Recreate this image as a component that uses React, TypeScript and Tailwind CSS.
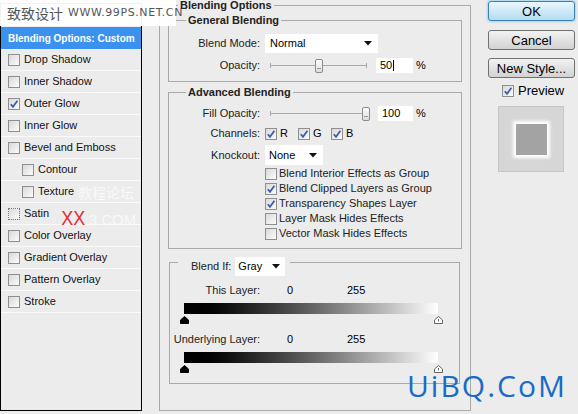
import React from 'react';

const ui = "font-['Liberation_Sans',Arial,sans-serif]";

function Check({ on = false, dotted = false }: { on?: boolean; dotted?: boolean }) {
  return (
    <span
      className={`w-[12px] h-[12px] shrink-0 flex items-center justify-center bg-linear-to-br from-[#d9d9d9] to-[#fbfbfb] border ${
        dotted ? 'border-dotted border-[#777]' : 'border-[#8f8f8f]'
      }`}
    >
      {on && (
        <svg width="10" height="10" viewBox="0 0 10 10">
          <path d="M1.8 5.2 L4 7.8 L8.4 1.8" fill="none" stroke="#3a59a8" strokeWidth="1.7" />
        </svg>
      )}
    </span>
  );
}

function Arrow() {
  return (
    <svg width="8" height="5" viewBox="0 0 8 5">
      <path d="M0 0 H8 L4 4.5 Z" fill="#111" />
    </svg>
  );
}

function Track({ width, pos }: { width: number; pos: number }) {
  return (
    <div className="relative h-[14px] flex items-center" style={{ width }}>
      <div className="w-full h-[1px] bg-[#a8a8a8]" />
      <div className="absolute left-0 top-[4px] w-[1px] h-[5px] bg-[#a8a8a8]" />
      <div className="absolute right-0 top-[4px] w-[1px] h-[5px] bg-[#a8a8a8]" />
      <div
        className="absolute top-0 w-[8px] h-[14px] rounded-[2px] border border-[#8b8b8b] bg-linear-to-b from-[#fdfdfd] to-[#dcdcdc] flex items-end justify-center pb-[3px]"
        style={{ left: pos }}
      >
        <div className="w-[4px] h-[1px] bg-[#9a9a9a]" />
      </div>
    </div>
  );
}

function Marker({ dark }: { dark?: boolean }) {
  return (
    <svg width="9" height="8" viewBox="0 0 9 8">
      <path
        d="M4.5 0.5 L8.5 4 V7.5 H0.5 V4 Z"
        fill={dark ? '#000' : '#fff'}
        stroke={dark ? '#000' : '#666'}
        strokeWidth="1"
      />
      {!dark && <path d="M4.5 3 V5.5" stroke="#666" strokeWidth="1" />}
    </svg>
  );
}

const effects = [
  { name: 'Drop Shadow' },
  { name: 'Inner Shadow' },
  { name: 'Outer Glow', on: true },
  { name: 'Inner Glow' },
  { name: 'Bevel and Emboss' },
  { name: 'Contour', sub: true },
  { name: 'Texture', sub: true },
  { name: 'Satin', dotted: true },
  { name: 'Color Overlay' },
  { name: 'Gradient Overlay' },
  { name: 'Pattern Overlay' },
  { name: 'Stroke' },
];

const advanced = [
  { label: 'Blend Interior Effects as Group' },
  { label: 'Blend Clipped Layers as Group', on: true },
  { label: 'Transparency Shapes Layer', on: true },
  { label: 'Layer Mask Hides Effects' },
  { label: 'Vector Mask Hides Effects' },
];

export default function App() {
  return (
    <div className={`relative w-[578px] h-[414px] overflow-hidden bg-[#ececec] text-[11px] text-black ${ui}`}>
      <div className="flex items-start">
        {/* Styles list */}
        <div className="mt-[3px] w-[142px] h-[408px] border border-black bg-[#ececec] flex flex-col">
          <div className="h-[23px] shrink-0" />
          <div className="h-[22px] shrink-0 bg-[#3a92ee] text-white font-bold text-[10px] flex items-center pl-[7px]">
            Blending Options: Custom
          </div>
          {effects.map((e) => (
            <div
              key={e.name}
              className={`h-[22px] shrink-0 flex items-center gap-[4px] border-b border-[#fafafa] ${
                e.sub ? 'pl-[21px]' : 'pl-[7px]'
              }`}
            >
              <Check on={e.on} dotted={e.dotted} />
              <span className="text-[#111]">{e.name}</span>
            </div>
          ))}
        </div>

        {/* Blending Options */}
        <fieldset className="ml-[17px] w-[312px] h-[411px] border border-[#a9a9a9] px-[8px]">
          <legend className="ml-[10px] px-[2px] h-[11px] leading-[11px] font-bold text-[#222]">
            Blending Options
          </legend>

          <fieldset className="mt-[3px] w-[294px] border border-[#a9a9a9] pb-[8px]">
            <legend className="ml-[17px] px-[2px] h-[13px] leading-[13px] font-bold text-[#222]">
              General Blending
            </legend>
            <div className="mt-[7px] flex items-center h-[19px]">
              <span className="w-[91px] text-right text-[#222]">Blend Mode:</span>
              <div className="ml-[5px] w-[113px] h-[19px] bg-white flex items-center justify-between pl-[5px] pr-[6px]">
                <span>Normal</span>
                <Arrow />
              </div>
            </div>
            <div className="mt-[5px] flex items-center h-[15px]">
              <span className="w-[91px] text-right text-[#222]">Opacity:</span>
              <div className="ml-[10px]">
                <Track width={97} pos={45} />
              </div>
              <div className="ml-[9px] w-[37px] h-[15px] bg-white flex items-center pl-[4px]">
                50<span className="ml-[1px] w-[1px] h-[11px] bg-black" />
              </div>
              <span className="ml-[3px]">%</span>
            </div>
          </fieldset>

          <fieldset className="mt-[4px] w-[294px] border border-[#a9a9a9] pb-[7px]">
            <legend className="ml-[17px] px-[2px] h-[13px] leading-[13px] font-bold text-[#222]">
              Advanced Blending
            </legend>
            <div className="mt-[7px] flex items-center h-[15px]">
              <span className="w-[91px] text-right text-[#222]">Fill Opacity:</span>
              <div className="ml-[10px]">
                <Track width={97} pos={92} />
              </div>
              <div className="ml-[11px] w-[35px] h-[15px] bg-white flex items-center pl-[4px]">100</div>
              <span className="ml-[3px]">%</span>
            </div>
            <div className="mt-[5px] flex items-center h-[15px]">
              <span className="w-[91px] text-right text-[#222]">Channels:</span>
              <div className="ml-[5px] flex items-center">
                {['R', 'G', 'B'].map((c) => (
                  <div key={c} className="w-[33px] flex items-center gap-[3px]">
                    <Check on />
                    <span>{c}</span>
                  </div>
                ))}
              </div>
            </div>
            <div className="mt-[4px] flex items-center h-[20px]">
              <span className="w-[91px] text-right text-[#222]">Knockout:</span>
              <div className="ml-[5px] w-[58px] h-[20px] bg-white flex items-center justify-between pl-[4px] pr-[6px]">
                <span>None</span>
                <Arrow />
              </div>
            </div>
            <div className="mt-[1px] flex flex-col">
              {advanced.map((a) => (
                <div key={a.label} className="h-[15px] flex items-center gap-[2px] pl-[96px]">
                  <Check on={a.on} />
                  <span className="text-[#222]">{a.label}</span>
                </div>
              ))}
            </div>
          </fieldset>

          <fieldset className="mt-[8px] ml-[1px] w-[291px] border border-[#a9a9a9] pb-[10px]">
            <legend className="ml-[8px] pl-[13px] pr-[5px] h-[10px]">
              <div className="flex items-center gap-[4px] h-[19px]">
                <span className="text-[#222]">Blend If:</span>
                <div className="w-[50px] h-[19px] bg-white flex items-center justify-between pl-[3px] pr-[5px]">
                  <span>Gray</span>
                  <Arrow />
                </div>
              </div>
            </legend>

            <div className="mt-[17px] flex items-center h-[13px]">
              <span className="w-[90px] text-right text-[#222]">This Layer:</span>
              <span className="ml-[27px] w-[60px]">0</span>
              <span>255</span>
            </div>
            <div className="mt-[6px] ml-[14px] w-[254px] h-[11px] bg-linear-to-r from-black to-white" />
            <div className="mt-[2px] ml-[10px] w-[263px] flex justify-between">
              <Marker dark />
              <Marker />
            </div>

            <div className="mt-[9px] flex items-center h-[13px]">
              <span className="w-[90px] text-right text-[#222]">Underlying Layer:</span>
              <span className="ml-[27px] w-[60px]">0</span>
              <span>255</span>
            </div>
            <div className="mt-[6px] ml-[14px] w-[254px] h-[11px] bg-linear-to-r from-black to-white" />
            <div className="mt-[2px] ml-[10px] w-[263px] flex justify-between">
              <Marker dark />
              <Marker />
            </div>
          </fieldset>
        </fieldset>

        {/* Buttons */}
        <div className="ml-[17px] mt-[1px] w-[87px] flex flex-col text-[13px]">
          <button className="h-[20px] rounded-[3px] border border-[#3c7fb1] bg-linear-to-b from-[#eaf6fd] to-[#b3dcf3] shadow-[0_0_2px_1px_#9fd6f3]">
            OK
          </button>
          <button className="mt-[9px] h-[20px] rounded-[3px] border border-[#707070] bg-linear-to-b from-[#f3f3f3] to-[#d2d2d2]">
            Cancel
          </button>
          <button className="mt-[8px] h-[20px] rounded-[3px] border border-[#707070] bg-linear-to-b from-[#f3f3f3] to-[#d2d2d2]">
            New Style...
          </button>
          <div className="mt-[6px] ml-[14px] h-[13px] flex items-center gap-[4px]">
            <Check on />
            <span>Preview</span>
          </div>
          <div className="mt-[9px] ml-[10px] w-[66px] h-[66px] bg-[#d6d6d6] border border-[#c6c6c6] flex items-center justify-center">
            <div className="w-[31px] h-[31px] bg-[#a3a3a3] shadow-[0_0_3px_3px_#ffffff]" />
          </div>
        </div>
      </div>

      {/* watermarks */}
      <div className="absolute left-0 top-0 w-[176px] h-[26px] bg-white/95 flex items-center pl-[7px] text-[#555] whitespace-nowrap">
        <span className="text-[14px] leading-[16px] font-['Noto_Sans_CJK_SC',sans-serif]">致致设计</span>
        <span className="ml-[5px] text-[11px] tracking-[0.6px] font-['DejaVu_Sans',sans-serif]">WWW.99PS.NET.CN</span>
      </div>
      <div className="absolute left-[78px] top-[184px] text-[14px] leading-[16px] text-white/70 whitespace-nowrap font-['Noto_Sans_CJK_SC',sans-serif]">
        教程论坛
      </div>
      <div className="absolute left-[60px] top-[203px] flex items-baseline whitespace-nowrap">
        <span className="text-[20px] text-[#e02f35] font-['Liberation_Sans',sans-serif] scale-x-90">XX</span>
        <span className="text-[15px] text-white/70 ml-[2px]">3.COM</span>
      </div>
      <div className="absolute left-[407px] top-[366px] text-[30px] leading-[40px] tracking-[2px] text-[#1a6bc6] font-['Open_Sans',sans-serif]">
        UiBQ.CoM
      </div>
    </div>
  );
}
